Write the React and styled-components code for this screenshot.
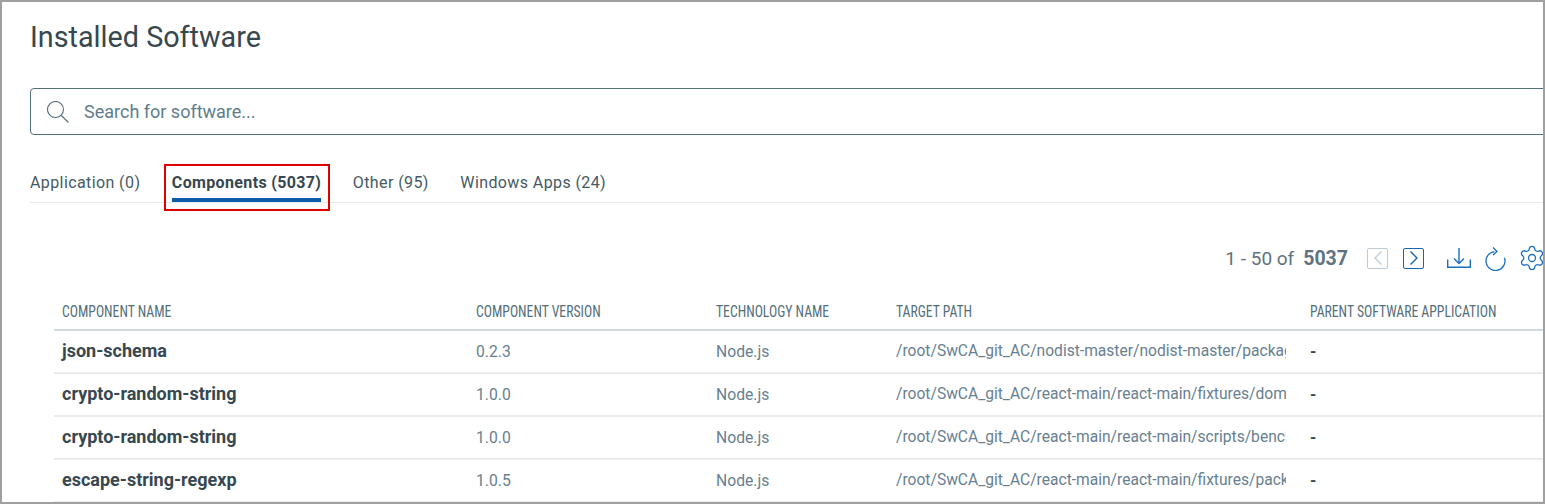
import styled, { createGlobalStyle } from "styled-components";
import { Settings } from "lucide-react";

const GlobalStyle = createGlobalStyle`
    html, body {
        margin: 0;
        padding: 0;
        background: #fff;
    }
    body {
        font-family: Roboto, "Liberation Sans", sans-serif;
        overflow: hidden;
    }
`;

const Frame = styled.div`
    width: 1545px;
    height: 504px;
    box-sizing: border-box;
    border: 2px solid #a0a0a0;
    background: #fff;
    overflow: hidden;
    padding: 0 0 0 28px;
`;

const Title = styled.h1`
    margin: 0;
    padding-top: 17px;
    height: 86px;
    box-sizing: border-box;
    font-size: 28.75px;
    line-height: 36px;
    font-weight: 400;
    color: #37474f;
`;

const SearchBox = styled.div`
    width: 1540px;
    height: 47px;
    box-sizing: border-box;
    border: 1px solid #546e7a;
    border-radius: 4px;
    display: flex;
    align-items: center;
    gap: 15px;
    padding-left: 16px;
    color: #607d8b;
    font-size: 18px;
`;

const Tabs = styled.div`
    display: flex;
    gap: 31.5px;
    height: 68px;
    box-sizing: border-box;
    padding-top: 33px;
    border-bottom: 1px solid #e8ebed;
`;

const Tab = styled.div`
    position: relative;
    height: 34px;
    font-size: 16px;
    line-height: 29px;
    letter-spacing: ${(p) => (p.$active ? "0.35px" : "0.4px")};
    color: ${(p) => (p.$active ? "#37474f" : "#455a64")};
    font-weight: ${(p) => (p.$active ? 700 : 400)};
    border-bottom: ${(p) => (p.$active ? "4px solid #0b5cad" : "none")};
    box-sizing: border-box;
`;

const Highlight = styled.span`
    position: absolute;
    left: -8px;
    right: -9px;
    top: -4px;
    bottom: -13px;
    border: 2px solid #e00000;
    pointer-events: none;
`;

const Toolbar = styled.div`
    display: flex;
    align-items: center;
    justify-content: flex-end;
    height: 88px;
    padding-top: 22px;
    box-sizing: border-box;
    color: #5f7280;
    font-size: 19px;
    white-space: nowrap;
`;

const Count = styled.span`
    margin-left: 9px;
    font-weight: 700;
    font-size: 19.5px;
`;

const PageButton = styled.span`
    width: 21px;
    height: 21px;
    box-sizing: border-box;
    display: flex;
    align-items: center;
    justify-content: center;
    border: ${(p) => (p.$disabled ? "1.5px solid #bccbd4" : "1.5px solid #1565b5")};
    border-radius: 2px;
    margin-left: ${(p) => p.$gap}px;
`;

const IconSlot = styled.span`
    display: flex;
    margin-left: ${(p) => p.$gap}px;
    margin-right: ${(p) => p.$after || 0}px;
`;

const Table = styled.div`
    margin-left: 24px;
`;

const Row = styled.div`
    display: grid;
    grid-template-columns: 414px 240px 180px 414px 1fr;
    height: ${(p) => (p.$head ? 40 : 43)}px;
    padding: ${(p) => (p.$head ? "2px 0 0" : "0 0 1px")};
    align-items: center;
    box-sizing: border-box;
    border-bottom: ${(p) => (p.$head ? "2px solid #d0d9e0" : "2px solid #e8ecee")};
`;

const HeadCell = styled.div`
    padding: 0 8px;
    font-stretch: 75%;
    font-size: 16px;
    color: #546e7a;
    white-space: nowrap;
    text-transform: uppercase;
`;

// the header face is narrower than Roboto's narrowest width
const HeadLabel = styled.span`
    display: inline-block;
    transform: scaleX(0.855);
    transform-origin: left center;
`;

const NameCell = styled.div`
    padding: 0 8px 1px;
    font-size: 18px;
    font-weight: 700;
    color: #37474f;
    white-space: nowrap;
`;

const Cell = styled.div`
    padding: 0 8px;
    font-size: 15.7px;
    color: #688090;
    white-space: nowrap;
`;

const PathCell = styled.div`
    margin: 0 16px 0 8px;
    font-size: 15.6px;
    color: #688090;
    white-space: nowrap;
    overflow: hidden;
`;

const ParentCell = styled.div`
    padding: 0 8px;
    font-size: 16px;
    font-weight: 700;
    color: #37474f;
`;

const columns = [
    "Component Name",
    "Component Version",
    "Technology Name",
    "Target Path",
    "Parent Software Application",
];

const components = [
    {
        name: "json-schema",
        version: "0.2.3",
        path: "/root/SwCA_git_AC/nodist-master/nodist-master/package.json",
    },
    {
        name: "crypto-random-string",
        version: "1.0.0",
        path: "/root/SwCA_git_AC/react-main/react-main/fixtures/dom/package.json",
    },
    {
        name: "crypto-random-string",
        version: "1.0.0",
        path: "/root/SwCA_git_AC/react-main/react-main/scripts/bench/package.json",
    },
    {
        name: "escape-string-regexp",
        version: "1.0.5",
        path: "/root/SwCA_git_AC/react-main/react-main/fixtures/packaging/package.json",
    },
];

function SearchIcon() {
    return (
        <svg width="22" height="22" viewBox="0 0 22 22" fill="none" stroke="#546e7a" strokeWidth="1.1">
            <circle cx="8.5" cy="8.5" r="8" />
            <path d="M14.3 14.5 21.5 21.5" />
        </svg>
    );
}

function Chevron({ left, color }) {
    return (
        <svg width="12" height="16" viewBox="0 0 12 16" fill="none" stroke={color} strokeWidth="1.4">
            <path d={left ? "M9.5 1.5 3 8l6.5 6.5" : "M2.5 1.5 9 8l-6.5 6.5"} />
        </svg>
    );
}

function DownloadIcon() {
    return (
        <svg width="24" height="22" viewBox="0 0 24 22" fill="none" stroke="#1a6fc0" strokeWidth="1.4">
            <path d="M.7 12.5v7.8h22.6v-7.8" />
            <path d="M12 1v15M7 11.5l5 5 5-5" />
        </svg>
    );
}

function RefreshIcon() {
    return (
        <svg width="21" height="25" viewBox="0 0 21 25" fill="none" stroke="#1a6fc0" strokeWidth="1.3">
            <path d="M9.5 5.55A9.5 9.5 0 1 0 19.4 11.75" />
            <path d="M8 1.5 12 5.5 8 9" />
        </svg>
    );
}

export default function App() {
    return (
        <Frame>
            <GlobalStyle />
            <Title>Installed Software</Title>

            <SearchBox>
                <SearchIcon />
                Search for software...
            </SearchBox>

            <Tabs>
                <Tab>Application (0)</Tab>
                <Tab $active>
                    Components (5037)
                    <Highlight />
                </Tab>
                <Tab>Other (95)</Tab>
                <Tab>Windows Apps (24)</Tab>
            </Tabs>

            <Toolbar>
                1 - 50 of
                <Count>5037</Count>
                <PageButton $disabled $gap={19}>
                    <Chevron left color="#bccbd4" />
                </PageButton>
                <PageButton $gap={15}>
                    <Chevron color="#1565b5" />
                </PageButton>
                <IconSlot $gap={23}>
                    <DownloadIcon />
                </IconSlot>
                <IconSlot $gap={14}>
                    <RefreshIcon />
                </IconSlot>
                <IconSlot $gap={12} $after={-3}>
                    <Settings size={28} strokeWidth={1.1} color="#1a6fc0" />
                </IconSlot>
            </Toolbar>

            <Table>
                <Row $head>
                    {columns.map((c) => (
                        <HeadCell key={c}>
                            <HeadLabel>{c}</HeadLabel>
                        </HeadCell>
                    ))}
                </Row>
                {components.map((c) => (
                    <Row key={c.path}>
                        <NameCell>{c.name}</NameCell>
                        <Cell>{c.version}</Cell>
                        <Cell>Node.js</Cell>
                        <PathCell>{c.path}</PathCell>
                        <ParentCell>-</ParentCell>
                    </Row>
                ))}
            </Table>
        </Frame>
    );
}
